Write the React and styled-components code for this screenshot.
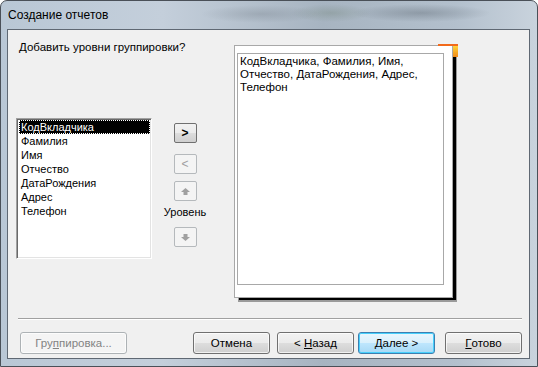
import React from 'react';
import styled, { createGlobalStyle } from 'styled-components';

const GlobalStyle = createGlobalStyle`
  body {
    margin: 0;
    background: #ffffff;
    font-family: "Liberation Sans", Arial, sans-serif;
  }
`

const Window = styled.div`
  width: 538px;
  height: 367px;
  box-sizing: border-box;
  display: flex;
  flex-direction: column;
  border: 1px solid #4a5058;
  border-radius: 7px 7px 0 0;
  background:
    radial-gradient(ellipse 70px 9px at 420px 12px, rgba(80,90,100,0.35), transparent),
    radial-gradient(ellipse 60px 9px at 260px 13px, rgba(110,120,130,0.3), transparent),
    radial-gradient(ellipse 40px 9px at 330px 12px, rgba(90,110,90,0.25), transparent),
    linear-gradient(90deg, #b9c7d5 0%, #c4cfdb 30%, #a7b4c1 60%, #b3c0cd 85%, #c9d3dd 100%);
`

const TitleBar = styled.div`
  height: 28px;
  display: flex;
  align-items: center;
  padding-left: 7px;
  font-size: 12px;
  color: #000;
`

const Client = styled.div`
  flex: 1;
  margin: 0 7px 7px 6px;
  border: 1px solid #5f6873;
  background: #f0f0f0;
  display: flex;
  flex-direction: column;
  font-size: 11px;
  color: #000;
`

const Main = styled.div`
  height: 288px;
  display: flex;
`

const LeftArea = styled.div`
  width: 226px;
  padding: 11px 0 0 8px;
  box-sizing: border-box;
`

const Heading = styled.div`
  margin-left: 3px;
  line-height: 13px;
  font-size: 11.5px;
`

const ListRow = styled.div`
  display: flex;
  margin-top: 64px;
`

const ListBox = styled.div`
  width: 136px;
  height: 141px;
  box-sizing: border-box;
  background: #fff;
  border-top: 1px solid #a0a0a0;
  border-left: 1px solid #a0a0a0;
  border-right: 1px solid #fff;
  border-bottom: 1px solid #fff;
  box-shadow: inset 1px 1px 0 #696969, inset -1px -1px 0 #e3e3e3;
  padding: 1px 1px 0 2px;
`

const Item = styled.div`
  height: 14px;
  line-height: 14px;
  padding-left: 2px;
  box-sizing: border-box;
  background: ${p => (p.selected ? '#000' : 'transparent')};
  color: ${p => (p.selected ? '#fff' : '#000')};
  outline: ${p => (p.selected ? '1px dotted #fff' : 'none')};
  outline-offset: -1px;
`

const ButtonColumn = styled.div`
  width: 46px;
  margin-left: 10px;
  padding-top: 5px;
  display: flex;
  flex-direction: column;
  align-items: center;
`

const SmallButton = styled.div`
  width: 23px;
  height: 20px;
  box-sizing: border-box;
  margin-top: ${p => p.top}px;
  border: 1px solid ${p => (p.disabled ? '#b5b9bc' : '#707070')};
  border-radius: 2px;
  background: ${p =>
    p.disabled
      ? '#f4f4f4'
      : 'linear-gradient(#f2f2f2 0%, #ebebeb 50%, #dddddd 51%, #cfcfcf 100%)'};
  color: ${p => (p.disabled ? '#a0a0a0' : '#000')};
  display: flex;
  align-items: center;
  justify-content: center;
  font-size: 12px;
  font-weight: ${p => (p.disabled ? 'normal' : 'bold')};
`

const LevelLabel = styled.div`
  margin-top: 4px;
  line-height: 14px;
`

const PreviewArea = styled.div`
  padding-top: 15px;
`

const Preview = styled.div`
  position: relative;
  width: 219px;
  height: 253px;
  box-sizing: border-box;
  background: #fff;
  border: 1px solid #a8a8a8;
  padding: 7px 8px 12px 2px;
  box-shadow: 4px 3px 0 -1px #000, 4px 4px 0 0 #9a9a9a;
`

const Corner = styled.div`
  position: absolute;
  top: -2px;
  right: -6px;
  width: 20px;
  height: 13px;
  border-top: 2px solid #f26a1b;
  box-sizing: border-box;
  &::after {
    content: '';
    position: absolute;
    right: 0;
    top: 0;
    width: 5px;
    height: 11px;
    background: linear-gradient(#ffd43a, #f5a623 60%, #f08a1c);
  }
`

const PreviewInner = styled.div`
  height: 100%;
  box-sizing: border-box;
  border: 1px solid #a8a8a8;
  padding: 1px 2px;
  line-height: 13px;
  font-size: 11.5px;
`

const Separator = styled.div`
  margin: 0 7px 0 10px;
  border-top: 1px solid #a0a0a0;
  border-bottom: 1px solid #fff;
`

const Footer = styled.div`
  display: flex;
  padding: 12px 0 0 12px;
`

const Button = styled.div`
  width: ${p => p.w}px;
  height: 22px;
  margin-left: ${p => p.gap || 0}px;
  box-sizing: border-box;
  border: 1px solid ${p => (p.disabled ? '#adb2b5' : p.primary ? '#3c7fb1' : '#707070')};
  border-radius: 3px;
  background: ${p =>
    p.disabled
      ? '#f4f4f4'
      : p.primary
      ? 'linear-gradient(#eaf6fd 0%, #d9f0fc 50%, #bee6fd 51%, #a7d9f5 100%)'
      : 'linear-gradient(#f2f2f2 0%, #ebebeb 50%, #dddddd 51%, #cfcfcf 100%)'};
  box-shadow: ${p => (p.primary ? 'inset 0 0 0 1px #48d0fc' : 'inset 0 0 0 1px rgba(255,255,255,0.7)')};
  color: ${p => (p.disabled ? '#838383' : '#000')};
  display: flex;
  align-items: center;
  justify-content: center;
  font-size: 11.5px;
  white-space: pre;
`

const Arrow = ({ down }) => (
  <svg width="9" height="7" viewBox="0 0 9 7" style={{ transform: down ? 'rotate(180deg)' : 'none' }}>
    <polygon points="4.5,0 9,4 0,4" fill="#a0a0a0" />
    <rect x="2.5" y="4" width="4" height="3" fill="#a0a0a0" />
  </svg>
)

const fields = ['КодВкладчика', 'Фамилия', 'Имя', 'Отчество', 'ДатаРождения', 'Адрес', 'Телефон']

export default function App() {
  return (
    <>
      <GlobalStyle />
      <Window>
        <TitleBar>Создание отчетов</TitleBar>
        <Client>
          <Main>
            <LeftArea>
              <Heading>Добавить уровни группировки?</Heading>
              <ListRow>
                <ListBox>
                  {fields.map((f, i) => (
                    <Item key={f} selected={i === 0}>{f}</Item>
                  ))}
                </ListBox>
                <ButtonColumn>
                  <SmallButton top={0}>&gt;</SmallButton>
                  <SmallButton top={11} disabled>&lt;</SmallButton>
                  <SmallButton top={7} disabled><Arrow /></SmallButton>
                  <LevelLabel>Уровень</LevelLabel>
                  <SmallButton top={8} disabled><Arrow down /></SmallButton>
                </ButtonColumn>
              </ListRow>
            </LeftArea>
            <PreviewArea>
              <Preview>
                <Corner />
                <PreviewInner>
                  КодВкладчика, Фамилия, Имя,<br />
                  Отчество, ДатаРождения, Адрес,<br />
                  Телефон
                </PreviewInner>
              </Preview>
            </PreviewArea>
          </Main>
          <Separator />
          <Footer>
            <Button w={107} disabled>Гру<u>п</u>пировка...</Button>
            <Button w={77} gap={66}>Отмена</Button>
            <Button w={77} gap={7}>{'< '}<u>Н</u>азад</Button>
            <Button w={77} gap={4} primary><u>Д</u>алее{' >'}</Button>
            <Button w={77} gap={10}><u>Г</u>отово</Button>
          </Footer>
        </Client>
      </Window>
    </>
  );
}
